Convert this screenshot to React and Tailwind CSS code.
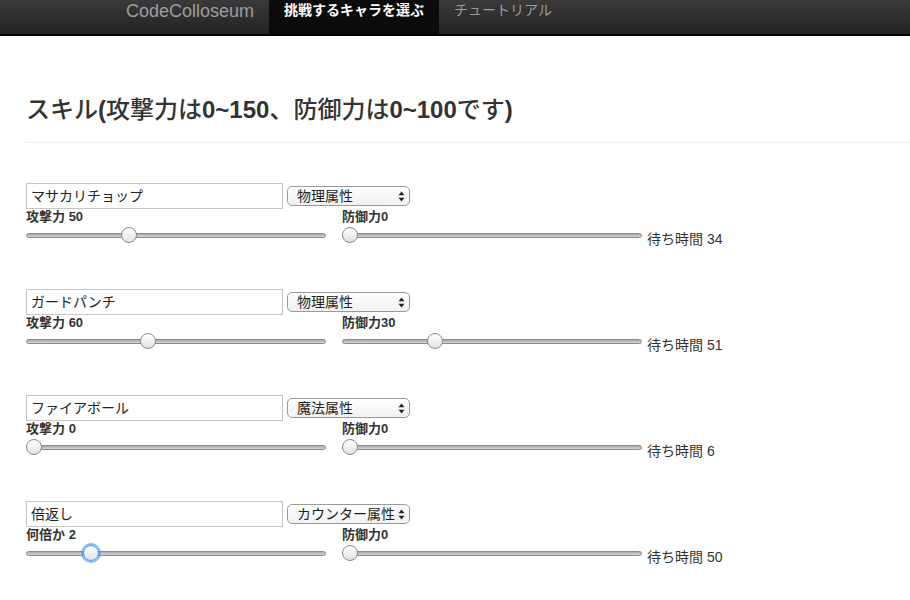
import React from 'react';

const skills = [
    { name: 'マサカリチョップ', type: '物理属性', atkLabel: '攻撃力', atk: 50, atkMax: 150, def: 0, wait: 34 },
    { name: 'ガードパンチ', type: '物理属性', atkLabel: '攻撃力', atk: 60, atkMax: 150, def: 30, wait: 51 },
    { name: 'ファイアボール', type: '魔法属性', atkLabel: '攻撃力', atk: 0, atkMax: 150, def: 0, wait: 6 },
    { name: '倍返し', type: 'カウンター属性', atkLabel: '何倍か', atk: 2, atkMax: 10, def: 0, wait: 50, focused: true },
];

const font = { fontFamily: '"Liberation Sans", "Noto Sans CJK JP", sans-serif' };

const Slider = ({ value, max, focused }) => {
    // thumb is 16px wide, track is 300px
    const left = (value / max) * 284;
    return (
        <div className="relative h-[20px] w-[300px]">
            <div className="absolute left-0 right-0 top-[8px] h-[5px] rounded-full border border-[#8c8c8c] bg-gradient-to-b from-[#a9a9a9] to-[#d6d6d6]" />
            <div
                className={
                    focused
                        ? 'absolute top-[2px] h-4 w-4 rounded-full border border-[#4d94e6] bg-gradient-to-b from-white to-[#dfe6ef] shadow-[0_0_0_2px_rgba(70,150,245,0.65)]'
                        : 'absolute top-[2px] h-4 w-4 rounded-full border border-[#8a8a8a] bg-gradient-to-b from-white to-[#e2e2e2]'
                }
                style={{ left }}
            />
        </div>
    );
};

const SelectBox = ({ value }) => (
    <div className="flex h-[20px] w-[123px] items-center justify-between rounded-[5px] border border-[#9a9a9a] bg-gradient-to-b from-white to-[#f1f1f1] pl-[9px] pr-[4px] text-[14px] leading-none text-[#222]">
        <span className="whitespace-nowrap">{value}</span>
        <svg width="7" height="11" viewBox="0 0 7 11" className="shrink-0">
            <path d="M3.5 0.5 L6.5 4.3 H0.5 Z" fill="#222" />
            <path d="M3.5 10.5 L6.5 6.7 H0.5 Z" fill="#222" />
        </svg>
    </div>
);

const SkillRow = ({ skill }) => (
    <div className="mb-[44px]">
        <div className="flex items-center gap-[4px]">
            <div className="flex h-[26px] w-[257px] items-center border border-[#c6c6c6] bg-white pl-[4px] text-[14px] text-[#222]">
                {skill.name}
            </div>
            <SelectBox value={skill.type} />
        </div>
        <div className="flex items-end">
            <div className="w-[300px]">
                <div className="text-[13px] font-bold leading-[16px] text-[#333]">
                    {skill.atkLabel} {skill.atk}
                </div>
                <Slider value={skill.atk} max={skill.atkMax} focused={skill.focused} />
            </div>
            <div className="ml-[16px] w-[300px]">
                <div className="text-[13px] font-bold leading-[16px] text-[#333]">防御力{skill.def}</div>
                <Slider value={skill.def} max={100} />
            </div>
            <div className="ml-[5px] text-[14px] leading-[11px] text-[#333]">待ち時間 {skill.wait}</div>
        </div>
    </div>
);

export default function App() {
    return (
        <div className="min-h-screen w-[910px] overflow-hidden bg-white" style={font}>
            <nav className="flex h-[36px] items-start border-b-2 border-black bg-gradient-to-b from-[#3a3a3a] to-[#232323] pl-[126px]">
                <div className="pr-[15px] text-[18px] leading-[22px] text-[#9d9d9d]">CodeColloseum</div>
                <div className="h-full bg-[#0b0b0b] px-[15px] text-[14px] font-bold leading-[20px] text-white">
                    挑戦するキャラを選ぶ
                </div>
                <div className="px-[15px] text-[14px] leading-[20px] text-[#9d9d9d]">チュートリアル</div>
            </nav>

            <div className="pl-[26px]">
                <div className="mt-[59px] border-b border-[#eeeeee] pb-[17px]">
                    <h1 className="text-[24px] font-medium leading-[30px] text-[#333]">
                        スキル<b className="font-bold">(</b>攻撃力は<b className="font-bold">0~150</b>、防御力は
                        <b className="font-bold">0~100</b>です<b className="font-bold">)</b>
                    </h1>
                </div>

                <div className="mt-[40px]">
                    {skills.map((s) => (
                        <SkillRow key={s.name} skill={s} />
                    ))}
                </div>
            </div>
        </div>
    );
}
